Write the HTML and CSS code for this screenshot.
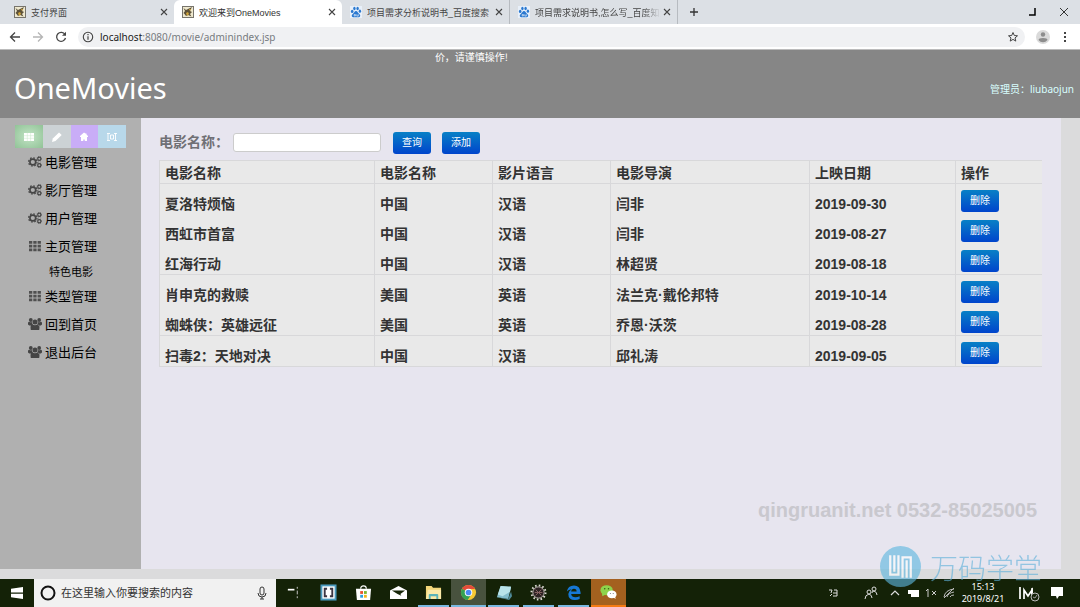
FILE: index.html
```html
<!DOCTYPE html>
<html lang="zh-CN">
<head>
<meta charset="utf-8">
<title>欢迎来到OneMovies</title>
<link rel="stylesheet" href="styles.css">
</head>
<body>
<svg class="defs" aria-hidden="true">
  <defs>
    <symbol id="cat" viewBox="0 0 12 12"><rect x=".5" y=".5" width="11" height="11" fill="#efe9cf" stroke="#77746c"/><path d="M1.500 2l2.500 2 2-1 4-2-2 4 2 1-2 2 1.500 2.500L6 9 4 10 2.500 8l-1-1L3 5z" fill="#5d5138"/><path d="M4 7l2-1 1 2-2 2zM7 3l2 0-1 2z" fill="#d2a63a"/></symbol>
    <symbol id="paw" viewBox="0 0 12 12"><rect width="12" height="12" fill="#e8f0fa"/><g fill="#2b79d0"><ellipse cx="2.200" cy="5.400" rx="1.300" ry="1.700"/><ellipse cx="4.400" cy="2.500" rx="1.200" ry="1.800"/><ellipse cx="7.600" cy="2.500" rx="1.200" ry="1.800"/><ellipse cx="9.900" cy="5.200" rx="1.200" ry="1.600"/><path d="M6 5C4.500 5 4 7 2.500 8.200 1 9.500 2 11.500 4 11.300h4c2 .2 3-1.800 1.500-3.100C8 7 7.500 5 6 5z"/></g><path d="M4.200 8.500h1.200v1.500H4.200zM6.800 8.300v1.800h1.500V8.300" fill="none" stroke="#fff" stroke-width=".6"/></symbol>
    <symbol id="x" viewBox="0 0 8 8"><path d="M1 1l6 6M7 1L1 7" stroke="currentColor" stroke-width="1.100"/></symbol>
    <symbol id="cogs" viewBox="0 0 14 12"><g fill="none" stroke="#454545"><circle cx="4.800" cy="6" r="2.900" stroke-width="1.600"/><circle cx="4.800" cy="6" r="4.200" stroke-width="1.200" stroke-dasharray="1.650 1.650"/><circle cx="11.300" cy="2.800" r="1.600" stroke-width="1.200"/><circle cx="11.300" cy="2.800" r="2.400" stroke-width=".6" stroke-dasharray=".9 .9"/><circle cx="11.300" cy="9.200" r="1.600" stroke-width="1.200"/><circle cx="11.300" cy="9.200" r="2.400" stroke-width=".6" stroke-dasharray=".9 .9"/></g></symbol>
    <symbol id="grid" viewBox="0 0 14 12"><path d="M1 1h3.300v2.800H1zM5.300 1h3.300v2.800H5.300zM9.600 1h3.300v2.800H9.600zM1 4.700h3.300v2.800H1zM5.300 4.700h3.300v2.800H5.300zM9.600 4.700h3.300v2.800H9.600zM1 8.400h3.300v2.800H1zM5.300 8.400h3.300v2.800H5.300zM9.600 8.400h3.300v2.800H9.600z" fill="#505050"/></symbol>
    <symbol id="group" viewBox="0 0 14 12"><g fill="#454545"><circle cx="2.800" cy="2" r="1.900"/><circle cx="11.200" cy="2" r="1.900"/><circle cx="7" cy="4" r="2.500"/><path d="M0 6.500V4.700q.6-1.300 1.700-.8 1.200.5 2.200.1Q4 5.900 5 6.600L3.500 7.500H1.200zM14 6.500V4.700q-.6-1.300-1.700-.8-1.200.5-2.200.1Q10 5.900 9 6.600l1.500.9h2.300zM2.800 12q-1-5.100 1.500-5.500 2.700 1.400 5.400 0 2.500.4 1.500 5.500z"/></g></symbol>
  </defs>
</svg>

<div class="tabs">
  <div class="tab tab-first"><svg class="fav"><use href="#cat"/></svg><span class="tab-title">支付界面</span><button class="close" aria-label="关闭"><svg><use href="#x"/></svg></button></div>
  <div class="tab active"><svg class="fav"><use href="#cat"/></svg><span class="tab-title">欢迎来到OneMovies</span><button class="close" aria-label="关闭"><svg><use href="#x"/></svg></button></div>
  <div class="tab line"><svg class="fav"><use href="#paw"/></svg><span class="tab-title">项目需求分析说明书_百度搜索</span><button class="close" aria-label="关闭"><svg><use href="#x"/></svg></button></div>
  <div class="tab line"><svg class="fav"><use href="#paw"/></svg><span class="tab-title fade">项目需求说明书,怎么写_百度知道</span><button class="close" aria-label="关闭"><svg><use href="#x"/></svg></button></div>
  <button class="new-tab" aria-label="新标签页"><svg viewBox="0 0 10 10"><path d="M5 1v8M1 5h8" stroke="#333" stroke-width="1.300"/></svg></button>
  <div class="window-buttons">
    <button aria-label="还原"><svg viewBox="0 0 10 10"><path d="M8 1v7H2" fill="none" stroke="#000" stroke-width="1.500"/></svg></button>
    <button aria-label="关闭窗口"><svg viewBox="0 0 10 10"><path d="M1 1l8 8M9 1L1 9" stroke="#333"/></svg></button>
  </div>
</div>

<div class="toolbar">
  <button aria-label="后退"><svg viewBox="0 0 12 12"><path d="M11 6H2M6 1.500L1.500 6 6 10.500" fill="none" stroke="#444" stroke-width="1.300"/></svg></button>
  <button aria-label="前进"><svg viewBox="0 0 12 12"><path d="M1 6h9M6 1.500L10.500 6 6 10.500" fill="none" stroke="#b5b5b5" stroke-width="1.300"/></svg></button>
  <button aria-label="刷新"><svg viewBox="0 0 12 12"><path d="M10 3.500A4.500 4.500 0 1 0 10.500 7" fill="none" stroke="#444" stroke-width="1.300"/><path d="M11 .8v4H7z" fill="#444"/></svg></button>
  <div class="address">
    <svg class="info" viewBox="0 0 12 12"><circle cx="6" cy="6" r="4.700" fill="none" stroke="#444" stroke-width="1.100"/><path d="M6 5.200v3.600M6 3v1.300" stroke="#444" stroke-width="1.200"/></svg>
    <span class="url"><b>localhost</b>:8080/movie/adminindex.jsp</span>
    <svg class="star" viewBox="0 0 12 12"><path d="M6 1.500l1.300 3 3.200.3L8 6.900l.8 3.200L6 8.400l-2.800 1.700L4 6.900 1.500 4.800l3.200-.3z" fill="none" stroke="#444"/></svg>
  </div>
  <svg class="avatar" viewBox="0 0 14 14"><circle cx="7" cy="7" r="7" fill="#dadada"/><circle cx="7" cy="4.500" r="2.200" fill="#8d8d8d"/><path d="M2.500 10q0-2 4.500-2t4.500 2q-1.800 2.200-4.500 2.200T2.500 10z" fill="#8d8d8d"/></svg>
  <svg class="dots" viewBox="0 0 4 12"><path d="M1 1h2v2H1zM1 5h2v2H1zM1 9h2v2H1z" fill="#444"/></svg>
</div>

<header class="site-header">
  <div class="notice"><span>价，请谨慎操作!</span></div>
  <div class="brand-row"><h1>OneMovies</h1><span class="admin">管理员：liubaojun</span></div>
</header>

<div class="page">
  <nav class="sidebar">
    <div class="shortcuts">
      <button class="green" aria-label="列表"><svg viewBox="0 0 12 12"><path d="M1 2h10v8H1z" fill="#fff"/><path d="M1 4.700h10M1 7.300h10M4.300 2v8M7.600 2v8" stroke="#c8e6cb" stroke-width=".5"/></svg></button>
      <button class="gray" aria-label="编辑"><svg viewBox="0 0 12 12"><path d="M1 11l.8-3.500L8 1.500l2.700 2.500-6.200 6z" fill="#fff"/></svg></button>
      <button class="purple" aria-label="用户"><svg viewBox="0 0 12 12"><path d="M6 1.500L2 5v1h1v4h2.300V8.500h1.400V10H9V6h1V5L8.500 3.500v-1h-1z" fill="#fff"/></svg></button>
      <button class="blue" aria-label="查看"><svg viewBox="0 0 12 12"><path d="M1 2.500h3M1 9.500h3M2 2.500v7M4.500 4h3v4h-3zM9.500 2v8M8 2.500h3M8 9.500h3" fill="none" stroke="#fff" stroke-width=".9"/></svg></button>
    </div>
    <a href="#"><svg><use href="#cogs"/></svg>电影管理</a>
    <a href="#"><svg><use href="#cogs"/></svg>影厅管理</a>
    <a href="#"><svg><use href="#cogs"/></svg>用户管理</a>
    <a href="#"><svg><use href="#grid"/></svg>主页管理</a>
    <a href="#" class="sub">特色电影</a>
    <a href="#"><svg><use href="#grid"/></svg>类型管理</a>
    <a href="#"><svg><use href="#group"/></svg>回到首页</a>
    <a href="#"><svg><use href="#group"/></svg>退出后台</a>
  </nav>

  <main>
    <form class="search">
      <label for="name">电影名称：</label>
      <input id="name" type="text">
      <button type="button" class="btn">查询</button>
      <button type="button" class="btn">添加</button>
    </form>
    <table>
      <colgroup><col class="c-name"><col class="c-short"><col class="c-short"><col class="c-director"><col class="c-date"><col></colgroup>
      <thead><tr><th>电影名称</th><th>电影名称</th><th>影片语言</th><th>电影导演</th><th>上映日期</th><th>操作</th></tr></thead>
      <tbody>
        <tr><td>夏洛特烦恼</td><td>中国</td><td>汉语</td><td>闫非</td><td>2019-09-30</td><td><button class="btn">删除</button></td></tr>
        <tr><td>西虹市首富</td><td>中国</td><td>汉语</td><td>闫非</td><td>2019-08-27</td><td><button class="btn">删除</button></td></tr>
        <tr class="ruled"><td>红海行动</td><td>中国</td><td>汉语</td><td>林超贤</td><td>2019-08-18</td><td><button class="btn">删除</button></td></tr>
        <tr><td>肖申克的救赎</td><td>美国</td><td>英语</td><td>法兰克·戴伦邦特</td><td>2019-10-14</td><td><button class="btn">删除</button></td></tr>
        <tr class="ruled"><td>蜘蛛侠：英雄远征</td><td>美国</td><td>英语</td><td>乔恩·沃茨</td><td>2019-08-28</td><td><button class="btn">删除</button></td></tr>
        <tr class="ruled"><td>扫毒2：天地对决</td><td>中国</td><td>汉语</td><td>邱礼涛</td><td>2019-09-05</td><td><button class="btn">删除</button></td></tr>
      </tbody>
    </table>
  </main>
</div>

<footer class="taskbar">
  <button class="start" aria-label="开始"><svg viewBox="0 0 14 14"><path d="M1 2.800L13 1v5.500H1zM1 7.800h12V13L1 11.200z" fill="#fff"/></svg></button>
  <div class="task-search">
    <svg class="ring" viewBox="0 0 16 16"><circle cx="8" cy="8" r="6.500" fill="none" stroke="#111" stroke-width="2"/></svg>
    <input type="text" aria-label="搜索" placeholder="在这里输入你要搜索的内容">
    <svg class="mic" viewBox="0 0 10 14"><rect x="3" y="1" width="4" height="8" rx="2" fill="none" stroke="#333"/><path d="M1 7q0 4 4 4t4-4M5 11v2M3 13h4" fill="none" stroke="#333"/></svg>
  </div>
  <div class="apps">
    <button aria-label="任务视图"><svg viewBox="0 0 18 18"><path d="M3 6h7" stroke="#fff" stroke-width="1.800"/><path d="M13 3v2M13 7v4M13 13v2" stroke="#ccc"/></svg></button>
    <button aria-label="Brackets"><svg viewBox="0 0 18 18"><rect x="1.500" y="1.500" width="15" height="15" fill="#fff" stroke="#4a9abd" stroke-width="2"/><path d="M7.500 5H5v8h2.500M10.500 5H13v8h-2.500" fill="none" stroke="#3b3542" stroke-width="2"/></svg></button>
    <button aria-label="应用商店"><svg viewBox="0 0 18 18"><path d="M1 5h16l-1 12H2z" fill="#fff"/><path d="M6 5q0-3 3-3t3 3" fill="none" stroke="#fff" stroke-width="1.200"/><path d="M5.500 7.500h3v3h-3z" fill="#e85230"/><path d="M9.500 7.500h3v3h-3z" fill="#7db72f"/><path d="M5.500 11.500h3v3h-3z" fill="#2e9fdf"/><path d="M9.500 11.500h3v3h-3z" fill="#f2b51d"/></svg></button>
    <button aria-label="邮件"><svg viewBox="0 0 18 18"><path d="M0 7l9-5 9 5v9H0z" fill="#fff"/><path d="M2 7h14l-5 3.500 1 2-4-2z" fill="#172608"/></svg></button>
    <button class="open" aria-label="文件夹"><svg viewBox="0 0 18 18"><path d="M1 2h6l1.500 2H17v12H1z" fill="#f2d67a"/><path d="M3 6h14v10H1z" fill="#faeaa8"/><path d="M4 16v-4.500q0-1 1-1h8q1 0 1 1V16h-2v-3H6v3z" fill="#5bb4b8"/></svg></button>
    <button class="open current" aria-label="Chrome"><svg viewBox="0 0 18 18"><circle cx="9" cy="9" r="8" fill="#f7c934"/><path d="M9 9L2.100 5A8 8 0 0 1 16 5.200H9z" fill="#e34b3b"/><path d="M9 9L2.100 5a8 8 0 0 0 6 12L12 11z" fill="#34a154"/><circle cx="9" cy="9" r="4" fill="#fff"/><circle cx="9" cy="9" r="3" fill="#4a8af4"/></svg></button>
    <button class="open" aria-label="记事本"><svg viewBox="0 0 18 18"><path d="M6 2l11 1-3 13-12-2z" fill="#83bdcc"/><path d="M6 2l11 1-1 5-8 5-5-2z" fill="#b9e4ea"/><path d="M2 14l12 2 3-8 1 5-3 4z" fill="#508c9b"/></svg></button>
    <button class="open" aria-label="Eclipse"><svg viewBox="0 0 18 18"><circle cx="9" cy="9" r="7.500" fill="none" stroke="#e0dcd8" stroke-width="2" stroke-dasharray="1.700 2.230"/><circle cx="9" cy="9" r="6" fill="#2e2424" stroke="#c9c1bd"/><path d="M6 6l6 6M12 6l-6 6M5 9h8" stroke="#8a6464"/></svg></button>
    <button class="open" aria-label="Edge"><svg viewBox="0 0 18 18"><path d="M2 8q1-6.500 7.500-6.500T16.500 9v1.500H6.500Q7 14 11 14q2.500 0 4.500-1v3q-2 1-5 1-7 0-7-6.500Q4 7 7 5.500 3.500 6 2 8zM6.500 8h5.800q0-3-2.800-3-2.500 0-3 3z" fill="#1778d4" fill-rule="evenodd"/></svg></button>
    <button class="open wechat" aria-label="微信"><svg viewBox="0 0 18 18"><ellipse cx="7" cy="6.500" rx="6.500" ry="5.300" fill="#8ed34b"/><path d="M2 9.500L2.500 13 6 11z" fill="#8ed34b"/><ellipse cx="12.500" cy="11" rx="5" ry="4.200" fill="#fff"/><path d="M14 14l2.500 2-.5-3z" fill="#fff"/><circle cx="5" cy="5" r=".8" fill="#365c16"/><circle cx="9" cy="5" r=".8" fill="#365c16"/><circle cx="11" cy="10" r=".6" fill="#777"/><circle cx="14" cy="10" r=".6" fill="#777"/></svg></button>
  </div>
  <div class="tray">
    <svg class="wide" viewBox="0 0 14 14"><path d="M3 4h3l-1 3M4 10l2-2M8 4h3v6H7M7 7h4" fill="none" stroke="#ddd"/></svg>
    <svg class="wide" viewBox="0 0 14 14"><circle cx="5" cy="6" r="2" fill="none" stroke="#ddd"/><path d="M1 13q0-4 4-5 3 1 3 4M10 5q3 1 3 4M8 7q0-2 2-2" fill="none" stroke="#ddd"/><circle cx="10" cy="3" r="2" fill="none" stroke="#ddd"/></svg>
    <svg viewBox="0 0 14 14"><path d="M3 9l4-4 4 4" fill="none" stroke="#ddd" stroke-width="1.200"/></svg>
    <svg viewBox="0 0 14 14"><path d="M2 4h11v7H5V8H2z" fill="#fff"/></svg>
    <svg viewBox="0 0 14 14"><path d="M2 5l2-2v8M8 5l4 4M12 5L8 9" fill="none" stroke="#ccc"/></svg>
    <svg viewBox="0 0 14 14"><path d="M2 11Q3 4 12 3M5 11q1-4 7-5M8 11q1-2 4-2M2 12L12 2" fill="none" stroke="#bbb"/></svg>
    <div class="clock"><span>15:13</span><span>2019/8/21</span></div>
    <svg class="input-method" viewBox="0 0 22 18"><path d="M2 3v12M6 15V6l4 6 4-6v9" fill="none" stroke="#fff" stroke-width="1.700"/><path d="M14 4v9" stroke="#fff" stroke-width="1.500"/><circle cx="17" cy="13" r="4" fill="#17230a" stroke="#bbb"/><path d="M15 13l2 1 2-3" stroke="#999" fill="none"/></svg>
    <svg class="message" viewBox="0 0 14 14"><path d="M1 1h12v9H9l-2 3-1-3H1z" fill="#fff"/></svg>
  </div>
</footer>

<div class="contact-mark">qingruanit.net 0532-85025005</div>
<div class="school-mark">
  <svg viewBox="0 0 40 40"><circle cx="20" cy="20" r="20" fill="#5db7df"/><path d="M10 9v19h8V9M14 9v16M22 31V11h8v20M26 14v17" fill="none" stroke="#fff" stroke-width="2.200"/></svg>
  <span>万码学堂</span>
</div>
</body>
</html>
```
FILE: styles.css
```css
* { box-sizing: border-box; }
body {
  margin: 0;
  height: 100vh;
  display: flex;
  flex-direction: column;
  position: relative;
  overflow: hidden;
  background: #dbdbdc;
  font-family: "Liberation Sans", "Noto Sans CJK SC", sans-serif;
}
button, input { font: inherit; }
button { border: 0; padding: 0; background: none; }
svg { display: block; flex: none; }
.defs { position: absolute; width: 0; height: 0; }

.tabs { display: flex; height: 24px; flex: none; background: #dce0e5; }
.tab { display: flex; align-items: center; width: 168px; padding: 0 4px 0 8px; font: 9px "Liberation Sans", "Noto Sans CJK SC", sans-serif; color: #444; }
.tab-first { width: 174px; padding-left: 14px; }
.tab.active { background: #fff; border-radius: 6px 6px 0 0; color: #333; }
.tab.line { border-right: 1px solid #b7bbc0; }
.fav { width: 12px; height: 12px; margin-right: 5px; }
.tab-title { flex: 1; overflow: hidden; white-space: nowrap; }
.fade { mask-image: linear-gradient(90deg, #000 85%, transparent); }
.close { width: 12px; color: #444; }
.close svg { width: 8px; height: 8px; margin: 0 auto; }
.new-tab { width: 32px; }
.new-tab svg, .window-buttons svg { width: 10px; height: 10px; margin: 0 auto; }
.window-buttons { display: flex; margin-left: auto; }
.window-buttons button { width: 32px; }

.toolbar { display: flex; align-items: center; height: 26px; flex: none; padding: 0 13px 0 9px; background: #fff; border-bottom: 1px solid #bbb; gap: 11px; }
.toolbar button svg, .info, .star { width: 12px; height: 12px; }
.address { display: flex; align-items: center; flex: 1; height: 20px; padding: 0 6px 0 4px; border-radius: 10px; background: #f0f1f3; gap: 6px; }
.url { flex: 1; font: 10px "Noto Sans", sans-serif; color: #777b80; }
.url b { font-weight: 400; color: #222; }
.avatar { width: 14px; height: 14px; }
.dots { width: 4px; height: 12px; margin-left: 2px; }

.site-header { flex: none; background: #868686; color: #fff; height: 68px; }
.notice { display: flex; justify-content: center; padding-right: 137px; font: 10px/14px "Noto Sans CJK SC", sans-serif; }
.brand-row { display: flex; align-items: center; justify-content: space-between; padding: 0 6px 0 14px; }
h1 { margin: 0; font: 400 29px/48px "Noto Sans", sans-serif; }
.admin { font: 10px "Noto Sans", "Noto Sans CJK SC", sans-serif; color: #d9ffff; }

.page { display: flex; flex: 1; min-height: 0; margin: 0 19px 10px 0; background: #e7e5ef; }
.sidebar { width: 141px; flex: none; padding-top: 7px; background: #b0b0b0; }
.shortcuts { display: flex; margin: 0 15px; }
.shortcuts button { flex: 1; height: 23px; }
.shortcuts svg { width: 12px; height: 12px; margin: 0 auto; }
.green { background: radial-gradient(#c3e4c6, #91c397); }
.gray { background: #ccd2d5; }
.purple { background: #c9adf7; }
.blue { background: #b8d8ea; }
.sidebar a { display: flex; align-items: center; gap: 3px; height: 28px; padding: 0 0 1px 28px; color: #000; font-size: 13px; text-decoration: none; }
.sidebar a svg { width: 14px; height: 12px; }
.sidebar a.sub { height: 22px; padding-left: 49px; font-size: 11px; }

main { flex: 1; padding: 13px 19px 0 18px; }
.search { display: flex; align-items: center; height: 23px; margin-bottom: 6px; }
.search label { width: 74px; flex: none; padding-bottom: 3px; color: #707075; font-size: 14px; font-weight: 700; white-space: nowrap; }
.search input { width: 148px; height: 19px; border: 1px solid #ccc; border-radius: 3px; background: #fff; }
.btn { display: block; height: 22px; padding: 0 9px; border-radius: 3px; background: linear-gradient(#0880c6, #0044cc); color: #fff; font-size: 10px; font-weight: 400; line-height: 20px; }
.search .btn { margin-left: 12px; }
.search .btn + .btn { margin-left: 11px; }

table { width: 100%; table-layout: fixed; border-collapse: collapse; background: #e9e9e9; border-top: 1px solid #d8d8da; border-left: 1px solid #d8d8da; color: #333; font-size: 14px; font-weight: 700; line-height: 20px; }
.c-name { width: 215px; }
.c-short { width: 118px; }
.c-director { width: 199px; }
.c-date { width: 146px; }
th, td { padding: 0 6px 0 5px; text-align: left; white-space: nowrap; border-left: 1px solid #d8d8da; }
th { height: 23px; padding-top: 2px; border-bottom: 1px solid #d8d8da; }
td { height: 30px; padding-top: 10px; vertical-align: top; }
td:last-child { padding-top: 6px; }
.ruled td { border-bottom: 1px solid #d8d8da; }

.taskbar { display: flex; height: 28px; flex: none; background: #142207; color: #fff; }
.start { width: 34px; }
.start svg { width: 14px; height: 14px; margin: 0 auto; }
.task-search { display: flex; align-items: center; width: 242px; padding: 0 9px 0 6px; background: #f1f1f1; }
.ring { width: 16px; height: 16px; }
.task-search input { flex: 1; min-width: 0; padding: 0 5px; border: 0; background: none; font-size: 11px; }
.task-search input::placeholder { color: #333; opacity: 1; }
.mic { width: 10px; height: 14px; }
.apps { display: flex; }
.apps button { width: 35px; border-bottom: 2px solid transparent; }
.apps svg { width: 17px; height: 17px; margin: 0 auto; }
.apps .open { border-image: linear-gradient(90deg, transparent 10%, #79b8e0 10%, #79b8e0 90%, transparent 90%) 2; }
.apps .current { background: #48523e; border-image: none; border-bottom-color: #79b8e0; }
.apps .wechat { background: #a4611f; border-image: none; border-bottom-color: #f57b14; }
.tray { display: flex; align-items: center; margin-left: auto; padding-right: 16px; gap: 4px; }
.tray svg { width: 14px; height: 14px; }
.tray svg.wide { margin-right: 20px; }
.tray svg.wide + svg:not(.wide) { margin-left: -14px; }
.clock { display: flex; flex-direction: column; align-items: center; width: 46px; font: 9px/12px "Noto Sans", sans-serif; }
.tray svg.input-method { width: 22px; height: 18px; margin: 0 6px 0 8px; }

.contact-mark { position: absolute; right: 43px; bottom: 86px; color: #c9c8ce; font-size: 20px; font-weight: 700; line-height: 22px; }
.school-mark { position: absolute; right: 38px; bottom: 20px; display: flex; align-items: center; gap: 9px; opacity: .62; color: #5fb0da; font: 300 28px/26px "Noto Sans CJK SC", sans-serif; }
.school-mark svg { width: 41px; height: 41px; }
```
